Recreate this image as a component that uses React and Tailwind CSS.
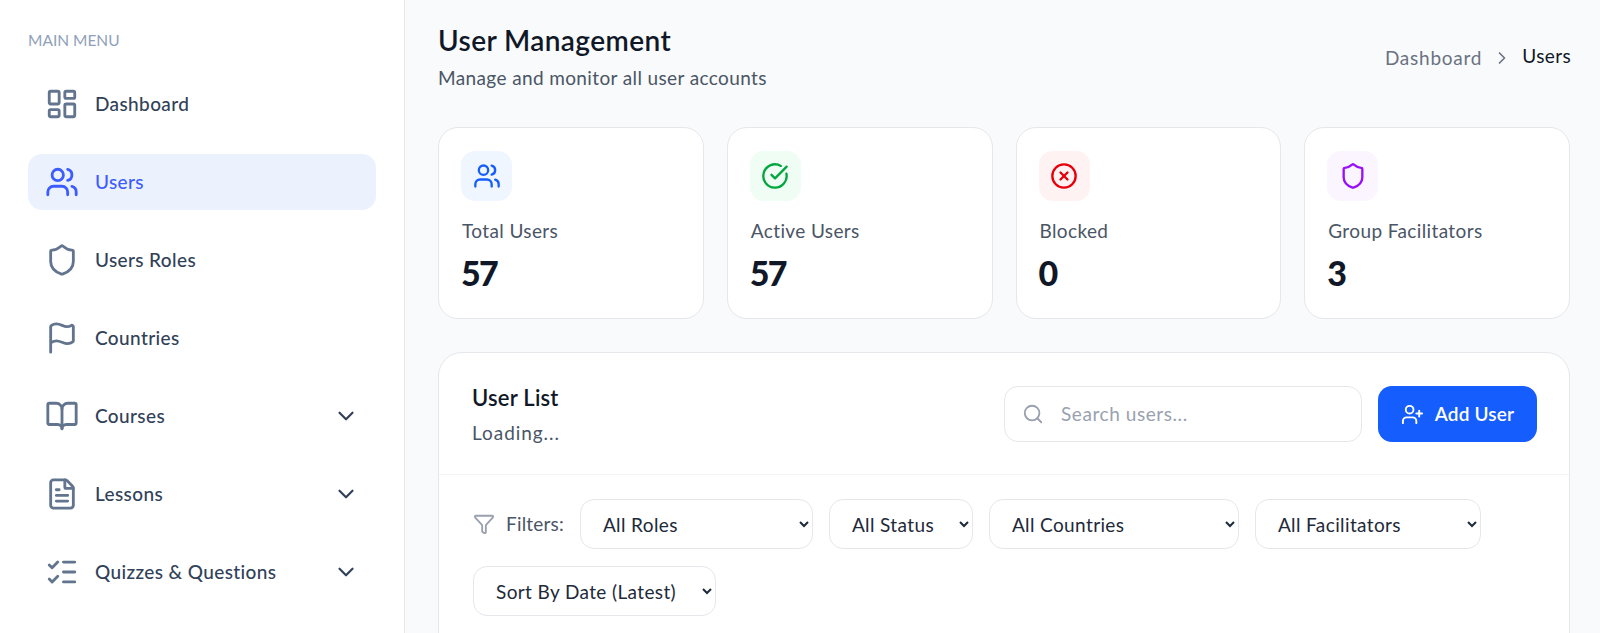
import React from "react";
import {
  LayoutDashboard,
  Users,
  Shield,
  Flag,
  BookOpen,
  FileText,
  ListChecks,
  ChevronDown,
  ChevronRight,
  CircleCheckBig,
  CircleX,
  Search,
  UserPlus,
  Funnel,
} from "lucide-react";

const menu = [
  { label: "Dashboard", icon: LayoutDashboard },
  { label: "Users", icon: Users, active: true },
  { label: "Users Roles", icon: Shield },
  { label: "Countries", icon: Flag },
  { label: "Courses", icon: BookOpen, more: true },
  { label: "Lessons", icon: FileText, more: true },
  { label: "Quizzes & Questions", icon: ListChecks, more: true },
];

const stats = [
  { label: "Total Users", value: "57", icon: Users, box: "bg-blue-50", color: "text-blue-600" },
  { label: "Active Users", value: "57", icon: CircleCheckBig, box: "bg-green-50", color: "text-green-600" },
  { label: "Blocked", value: "0", icon: CircleX, box: "bg-red-50", color: "text-red-600" },
  { label: "Group Facilitators", value: "3", icon: Shield, box: "bg-purple-50", color: "text-purple-600" },
];

const Select = ({ width, label }) => (
  <select className={`${width} h-[50px] rounded-[14px] border border-gray-200 bg-white pl-[18px] pr-1 text-[19px] tracking-[0.02em] text-gray-800`}>
    <option>{label}</option>
  </select>
);

const App = () => {
  return (
    <div className="flex h-[633px] overflow-hidden bg-gray-50 font-['Lato',sans-serif]">
      {/* Sidebar */}
      <aside className="w-[405px] shrink-0 border-r border-gray-200 bg-white pl-[28px] pr-[28px] pt-[30px]">
        <p className="mb-[26px] text-[15.5px] leading-[20px] text-slate-400">MAIN MENU</p>
        <nav className="flex flex-col gap-[22px]">
          {menu.map((item) => {
            const Icon = item.icon;
            return (
              <div
                key={item.label}
                className={`flex h-[56px] items-center rounded-[14px] pl-[17px] pr-[17px] ${
                  item.active ? "bg-[#ebf2fe] text-[#3d5cff]" : "text-slate-700"
                }`}
              >
                <Icon
                  size={34}
                  strokeWidth={2}
                  className={item.active ? "text-[#3d5cff]" : "text-slate-500"}
                />
                <span className="ml-[16px] flex-1 text-[19px] font-medium tracking-[0.02em]">{item.label}</span>
                {item.more && <ChevronDown size={26} className="text-slate-700" />}
              </div>
            );
          })}
        </nav>
      </aside>

      {/* Main */}
      <main className="flex-1 pl-[33px] pr-[30px] pt-[23px]">
        <div className="flex items-start justify-between">
          <div>
            <h1 className="text-[28px] font-semibold leading-[34px] tracking-[0.015em] text-gray-900">User Management</h1>
            <p className="mt-[7px] text-[19px] leading-[28px] tracking-[0.02em] text-gray-600">Manage and monitor all user accounts</p>
          </div>
          <div className="-mr-px mt-[19px] flex items-center gap-[10px] text-[19px] tracking-[0.04em]">
            <span className="text-gray-500">Dashboard</span>
            <ChevronRight size={20} className="text-gray-500" />
            <span className="mb-[4px] tracking-[0.02em] text-gray-900">Users</span>
          </div>
        </div>

        <div className="mt-[35px] grid grid-cols-4 gap-[23px]">
          {stats.map((s) => {
            const Icon = s.icon;
            return (
              <div key={s.label} className="h-[192px] rounded-[20px] border border-gray-200 bg-white pl-[22px] pt-[23px]">
                <div className={`flex h-[50px] w-[51px] items-center justify-center rounded-[14px] ${s.box}`}>
                  <Icon size={28} className={s.color} />
                </div>
                <p className="ml-px mt-[16px] text-[19px] leading-[28px] tracking-[0.02em] text-gray-600">{s.label}</p>
                <p className="mt-[8px] text-[34px] font-black leading-[40px] tracking-[-0.05em] text-gray-900">{s.value}</p>
              </div>
            );
          })}
        </div>

        <section className="mt-[33px] h-[400px] rounded-[24px] border border-gray-200 bg-white">
          <div className="flex items-start justify-between border-b border-gray-100 pb-[27px] pl-[33px] pr-[32px] pt-[31px]">
            <div>
              <h2 className="text-[22px] font-semibold leading-[28px] tracking-[0.01em] text-gray-900">User List</h2>
              <p className="mt-[7px] text-[19px] leading-[28px] tracking-[0.05em] text-gray-600">Loading...</p>
            </div>
            <div className="mt-[2px] flex gap-[16px]">
              <div className="flex h-[56px] w-[358px] items-center rounded-[14px] border border-gray-200 pl-[17px]">
                <Search size={22} className="text-gray-400" />
                <span className="ml-[17px] text-[19px] tracking-[0.03em] text-gray-400">Search users...</span>
              </div>
              <button className="flex h-[56px] w-[159px] items-center justify-center gap-[11px] rounded-[14px] bg-[#155dfc] text-[19px] font-semibold tracking-[0.01em] text-white">
                <UserPlus size={23} />
                Add User
              </button>
            </div>
          </div>

          <div className="flex flex-wrap items-center gap-x-[16px] gap-y-[17px] px-[34px] pt-[24px]">
            <div className="flex items-center gap-[11px] text-gray-600">
              <Funnel size={22} className="text-gray-400" />
              <span className="text-[19px] tracking-[0.01em]">Filters:</span>
            </div>
            <Select width="w-[233px]" label="All Roles" />
            <Select width="w-[144px]" label="All Status" />
            <Select width="w-[250px]" label="All Countries" />
            <Select width="w-[226px]" label="All Facilitators" />
            <Select width="w-[243px]" label="Sort By Date (Latest)" />
          </div>
        </section>
      </main>
    </div>
  );
};

export default App;
